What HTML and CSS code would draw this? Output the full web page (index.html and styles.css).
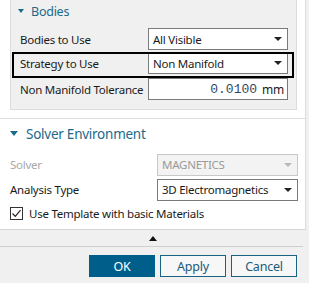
FILE: index.html
```html
<!DOCTYPE html>
<html>
<head>
<meta charset="utf-8">
<link rel="stylesheet" href="styles.css">
</head>
<body>
<div class="page">
  <div class="main">
    <div class="group">
      <div class="ghead"><span class="tri-down"></span><span class="htext">Bodies</span></div>
      <div class="row r1">
        <span class="label">Bodies to Use</span>
        <div class="select"><span>All Visible</span><span class="arrow"></span></div>
      </div>
      <div class="row r2">
        <span class="label">Strategy to Use</span>
        <div class="select"><span>Non Manifold</span><span class="arrow"></span></div>
        <div class="focus"></div>
      </div>
      <div class="row r3">
        <span class="label">Non Manifold Tolerance</span>
        <div class="input"><span class="num">0.0100</span><span class="unit">mm</span></div>
      </div>
    </div>
    <div class="sep"></div>
    <div class="solver">
      <div class="shead"><span class="tri-down big"></span><span class="htext">Solver Environment</span></div>
      <div class="srow s1">
        <span class="label dis">Solver</span>
        <div class="select wide disabled"><span>MAGNETICS</span><span class="arrow"></span></div>
      </div>
      <div class="srow s2">
        <span class="label">Analysis Type</span>
        <div class="select wide"><span>3D Electromagnetics</span><span class="arrow"></span></div>
      </div>
      <div class="check">
        <span class="box"><svg width="11" height="11" viewBox="0 0 11 11"><path d="M1.5 5.5 L4.3 8.3 L9.5 2.2" fill="none" stroke="#222" stroke-width="1.2"/></svg></span>
        <span class="clabel">Use Template with basic Materials</span>
      </div>
    </div>
  </div>
  <div class="footer">
    <div class="collapse"><span class="tri-up"></span></div>
    <div class="buttons">
      <button class="btn ok">OK</button>
      <button class="btn">Apply</button>
      <button class="btn">Cancel</button>
    </div>
  </div>
</div>
</body>
</html>
```
FILE: styles.css
```css
* { box-sizing: border-box; }
html, body { margin: 0; padding: 0; }
body {
  background: #f0f0f0;
  font-family: "Noto Sans", "Open Sans", "DejaVu Sans", sans-serif;
  font-size: 11.5px;
  letter-spacing: -0.25px;
  color: #1a1a1a;
  width: 309px;
  height: 283px;
  overflow: hidden;
}
.page { width: 309px; }
.main {
  width: 306px;
  height: 230px;
  background: #ffffff;
  border-right: 1px solid #dcdcdc;
  border-bottom: 1px solid #d4d4d4;
}
.group {
  margin-left: 10px;
  width: 287px;
  height: 110px;
  background: #f0f0f0;
  border: 1px solid #dcdcdc;
  border-top: 0;
}
.ghead {
  height: 26px;
  display: flex;
  align-items: center;
  padding-left: 7px;
  padding-bottom: 4px;
}
.tri-down {
  width: 0; height: 0;
  border-left: 3.5px solid transparent;
  border-right: 3.5px solid transparent;
  border-top: 4px solid #1c6a8b;
  margin-right: 7px;
}
.tri-down.big {
  border-left-width: 4px;
  border-right-width: 4px;
  border-top-width: 5px;
  margin-right: 8px;
}
.htext { color: #1c6a8b; font-size: 12.5px; }
.row {
  display: flex;
  align-items: center;
  height: 22px;
  position: relative;
}
.r1 { margin-top: 2px; }
.r2 { margin-top: 2px; }
.r3 { margin-top: 4px; }
.label {
  width: 137px;
  padding-left: 9px;
  white-space: nowrap;
  overflow: hidden;
}
.select {
  width: 140px;
  height: 22px;
  background: #fff;
  border: 1px solid #7a7a7a;
  display: flex;
  align-items: center;
  justify-content: space-between;
  padding: 0 5px 0 4px;
  color: #1a1a1a;
}
.arrow {
  width: 0; height: 0;
  border-left: 4px solid transparent;
  border-right: 4px solid transparent;
  border-top: 4px solid #222;
}
.focus {
  position: absolute;
  left: 1px; top: 0;
  width: 282px; height: 26px;
  border: 2px solid #000;
  pointer-events: none;
}
.input {
  width: 140px;
  height: 22px;
  background: #fff;
  border: 1px solid #7a7a7a;
  display: flex;
  align-items: center;
  justify-content: flex-end;
  padding-right: 3px;
  color: #34475e;
}
.num { font-family: "Liberation Mono", "DejaVu Sans Mono", monospace; font-size: 13px; letter-spacing: 0; margin-right: 5px; }
.unit { font-size: 12px; color: #1a1a1a; }
.sep {
  margin-top: 8px;
  border-top: 1px solid #dcdcdc;
}
.shead {
  height: 27px;
  display: flex;
  align-items: center;
  padding-left: 10px;
  margin-top: 1px;
}
.shead .htext { font-size: 13.5px; }
.srow {
  display: flex;
  align-items: center;
  height: 23px;
}
.s1 { margin-top: 6px; }
.s2 { margin-top: 2px; }
.srow .label { width: 157px; padding-left: 10px; }
.dis { color: #a8a8a8; }
.select.wide { width: 141px; }
.select.disabled { border-color: #c8c8c8; background: #f3f3f3; color: #9a9a9a; }
.select.disabled .arrow { border-top-color: #b8b8b8; }
.check {
  display: flex;
  align-items: center;
  height: 20px;
  margin-top: 2px;
  padding-left: 10px;
}
.box {
  width: 13px; height: 13px;
  border: 1px solid #333;
  background: #fff;
  display: flex;
  align-items: center;
  justify-content: center;
  margin-right: 6px;
}
.box svg { display: block; }
.footer { height: 53px; }
.collapse {
  height: 17px;
  border-bottom: 1px solid #d0d0d0;
  width: 303px;
  display: flex;
  justify-content: center;
  align-items: center;
  padding-left: 2px;
}
.tri-up {
  width: 0; height: 0;
  border-left: 4px solid transparent;
  border-right: 4px solid transparent;
  border-bottom: 5px solid #111;
}
.buttons {
  display: flex;
  justify-content: flex-end;
  gap: 5px;
  margin-top: 8px;
  width: 297px;
}
.btn {
  width: 66px;
  height: 22px;
  font-family: inherit;
  font-size: 12.5px;
  letter-spacing: -0.2px;
  border: 1px solid #1a6283;
  background: #f7f7f7;
  color: #1a5a7a;
  padding: 0;
}
.btn.ok { background: #005f8a; border-color: #005f8a; color: #fff; }
```
